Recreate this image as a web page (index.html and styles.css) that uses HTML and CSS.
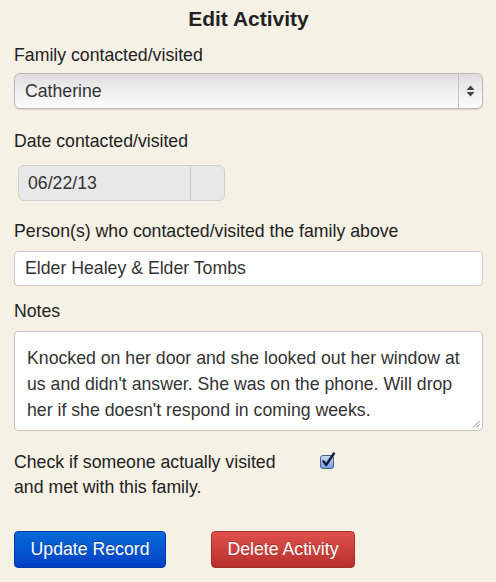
FILE: index.html
```html
<!DOCTYPE html>
<html>
<head>
<meta charset="utf-8">
<link rel="stylesheet" href="styles.css">
</head>
<body>
<form class="page">
  <h1 class="title">Edit Activity</h1>

  <div class="label first">Family contacted/visited</div>
  <div class="select">
    <span class="select-text">Catherine</span>
    <span class="select-btn">
      <svg width="9" height="12" viewBox="0 0 9 12"><path d="M4.5 0.5 L8.5 5 L0.5 5 Z" fill="#444"/><path d="M4.5 11.5 L8.5 7 L0.5 7 Z" fill="#444"/></svg>
    </span>
  </div>

  <div class="label date-label">Date contacted/visited</div>
  <div class="date">
    <span class="date-text">06/22/13</span>
    <span class="date-btn"></span>
  </div>

  <div class="label person-label">Person(s) who contacted/visited the family above</div>
  <div class="input">Elder Healey &amp; Elder Tombs</div>

  <div class="label notes-label">Notes</div>
  <div class="textarea">Knocked on her door and she looked out her window at us and didn't answer. She was on the phone. Will drop her if she doesn't respond in coming weeks.
    <svg class="grip" width="8" height="8" viewBox="0 0 8 8"><path d="M7.5 1 L1 7.5 M7.5 4.5 L4.5 7.5" stroke="#888" stroke-width="1"/></svg>
  </div>

  <div class="check-row">
    <div class="check-text">Check if someone actually visited and met with this family.</div>
    <svg class="checkbox" width="16" height="17" viewBox="0 0 16 17">
      <defs>
        <linearGradient id="cb" x1="0" y1="0" x2="0" y2="1">
          <stop offset="0" stop-color="#c9dcf7"/>
          <stop offset="1" stop-color="#6f9ee6"/>
        </linearGradient>
      </defs>
      <rect x="0.5" y="3.5" width="13" height="13" rx="2.5" fill="url(#cb)" stroke="#4a5f8a"/>
      <path d="M3.5 9.5 L6.3 12.8 L13.8 1.6" fill="none" stroke="#15203a" stroke-width="2.6" stroke-linecap="round" stroke-linejoin="round"/>
    </svg>
  </div>

  <div class="buttons">
    <button type="button" class="btn btn-primary">Update Record</button>
    <button type="button" class="btn btn-danger">Delete Activity</button>
  </div>
</form>
</body>
</html>
```

FILE: styles.css
```css
html, body {
  margin: 0;
  padding: 0;
  background: #f6f1e5;
}
body {
  font-family: "Liberation Sans", Arial, Helvetica, sans-serif;
  color: #222222;
  font-size: 17.7px;
}
.page {
  padding: 7px 13px 0 14px;
  display: flex;
  flex-direction: column;
  align-items: stretch;
}
.title {
  margin: 0;
  font-size: 21px;
  line-height: 24px;
  font-weight: bold;
  text-align: center;
  color: #222;
}
.label {
  line-height: 20px;
  color: #222222;
}
.first { margin-top: 14px; }
.select {
  margin-top: 8px;
  height: 36px;
  box-sizing: border-box;
  border: 1px solid #b9b9b9;
  border-radius: 6px;
  background: linear-gradient(#dedede, #f1f1f1 55%, #fbfbfb);
  box-shadow: 0 1px 1px rgba(0,0,0,0.12);
  display: flex;
  align-items: center;
}
.select-text {
  flex: 1;
  padding-left: 10px;
  color: #333;
}
.select-btn {
  width: 23px;
  align-self: stretch;
  border-left: 1px solid #c2c2c2;
  display: flex;
  align-items: center;
  justify-content: center;
}
.date-label { margin-top: 22px; }
.date {
  margin-top: 14px;
  margin-left: 4px;
  width: 207px;
  height: 36px;
  box-sizing: border-box;
  border: 1px solid #cfcfcf;
  border-radius: 6px;
  background: #e8e8e8;
  display: flex;
  align-items: center;
}
.date-text {
  flex: 1;
  padding-left: 9px;
  color: #333;
}
.date-btn {
  width: 33px;
  align-self: stretch;
  border-left: 1px solid #c8c8c8;
}
.person-label { margin-top: 20px; }
.input {
  margin-top: 10px;
  height: 35px;
  box-sizing: border-box;
  border: 1px solid #cccccc;
  border-radius: 4px;
  background: #ffffff;
  padding-left: 10px;
  display: flex;
  align-items: center;
  color: #333;
}
.notes-label { margin-top: 15px; }
.textarea {
  position: relative;
  margin-top: 10px;
  height: 100px;
  box-sizing: border-box;
  border: 1px solid #c6c6c6;
  border-radius: 4px;
  background: #ffffff;
  padding: 13px 8px 0 12px;
  line-height: 26px;
  color: #333;
}
.grip {
  position: absolute;
  right: 2px;
  bottom: 2px;
}
.check-row {
  margin-top: 19px;
  display: flex;
  align-items: flex-start;
}
.check-text {
  width: 274px;
  line-height: 25px;
  color: #222222;
}
.checkbox {
  margin-left: 32px;
  margin-top: 2px;
}
.buttons {
  margin-top: 31px;
  display: flex;
  gap: 45px;
}
.btn {
  height: 37px;
  box-sizing: border-box;
  border-radius: 4px;
  font-family: "Liberation Sans", Arial, Helvetica, sans-serif;
  font-size: 17.7px;
  color: #ffffff;
  padding: 0;
  cursor: pointer;
  text-shadow: 0 -1px 0 rgba(0,0,0,0.25);
}
.btn-primary {
  width: 152px;
  border: 1px solid #0036a8;
  background: linear-gradient(#0b6bd8, #0040c6);
}
.btn-danger {
  width: 144px;
  border: 1px solid #a3302a;
  background: linear-gradient(#e0504c, #b7302c);
}
```
